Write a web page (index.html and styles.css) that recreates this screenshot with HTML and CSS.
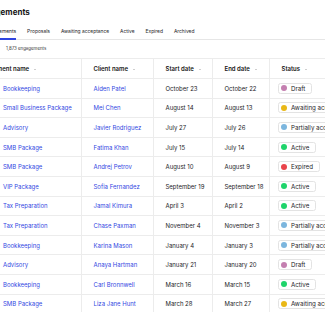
FILE: index.html
```html
<!DOCTYPE html>
<html lang="en">
<head>
    <meta charset="UTF-8">
    <meta name="viewport" content="width=device-width, initial-scale=1.0">
    <title>Engagements</title>
    <link rel="stylesheet" href="styles.css">
</head>
<body>
    <div class="page">
        <h1 class="title">Engagements</h1>

        <div class="tabs">
            <a class="tab active">Engagements</a>
            <a class="tab">Proposals</a>
            <a class="tab">Awaiting acceptance</a>
            <a class="tab">Active</a>
            <a class="tab">Expired</a>
            <a class="tab">Archived</a>
        </div>

        <div class="count">1,873 engagements</div>

        <table class="grid">
            <colgroup>
                <col class="c-name">
                <col class="c-client">
                <col class="c-start">
                <col class="c-end">
                <col class="c-status">
            </colgroup>
            <thead>
                <tr>
                    <th class="first">Engagement name <span class="caret"></span></th>
                    <th>Client name <span class="caret"></span></th>
                    <th>Start date <span class="caret"></span></th>
                    <th>End date <span class="caret"></span></th>
                    <th>Status <span class="caret"></span></th>
                </tr>
            </thead>
            <tbody id="rows"></tbody>
        </table>
    </div>

    <script>
        const rows = [
            ["Bookkeeping", "Aiden Patel", "October 23", "October 22", "draft"],
            ["Small Business Package", "Mei Chen", "August 14", "August 13", "awaiting"],
            ["Advisory", "Javier Rodriguez", "July 27", "July 26", "partial"],
            ["SMB Package", "Fatima Khan", "July 15", "July 14", "active"],
            ["SMB Package", "Andrej Petrov", "August 10", "August 9", "expired"],
            ["VIP Package", "Sofia Fernandez", "September 19", "September 18", "active"],
            ["Tax Preparation", "Jamal Kimura", "April 3", "April 2", "active"],
            ["Tax Preparation", "Chase Paxman", "November 4", "November 3", "partial"],
            ["Bookkeeping", "Karina Mason", "January 4", "January 3", "partial"],
            ["Advisory", "Anaya Hartman", "January 21", "January 20", "draft"],
            ["Bookkeeping", "Carl Bronnwell", "March 16", "March 15", "active"],
            ["SMB Package", "Liza Jane Hunt", "March 28", "March 27", "awaiting"]
        ];

        const labels = {
            draft: "Draft",
            awaiting: "Awaiting acceptance",
            partial: "Partially accepted",
            active: "Active",
            expired: "Expired"
        };

        let body = document.getElementById("rows");
        rows.forEach(r => {
            let tr = document.createElement("tr");
            tr.innerHTML = `
                <td><a class="link">${r[0]}</a></td>
                <td><a class="link">${r[1]}</a></td>
                <td>${r[2]}</td>
                <td>${r[3]}</td>
                <td class="status-cell"><span class="badge"><span class="dot ${r[4]}"></span>${labels[r[4]]}</span></td>
            `;
            body.appendChild(tr);
        });
    </script>
</body>
</html>
```

FILE: styles.css
```css
* {
    margin: 0;
    padding: 0;
    box-sizing: border-box;
}
html, body {
    overflow: hidden;
}
body {
    background: #fff;
    color: #1d1d1f;
    font-family: Inter, "Noto Sans", sans-serif;
}
.page {
    width: 420px;
    margin-left: -14px;
}
.title {
    margin: 7px 0 0 -10px;
    font-size: 8px;
    line-height: 10px;
    font-weight: 700;
    color: #141414;
}
.tabs {
    display: flex;
    gap: 11px;
    margin: 11px 0 0 -1.5px;
    border-bottom: 1px solid #e6e6e6;
}
.tab {
    font-size: 4.9px;
    line-height: 6px;
    padding-bottom: 4px;
    color: #1d1d1f;
    margin-bottom: -1px;
    border-bottom: 2px solid transparent;
}
.tab.active {
    border-bottom-color: #2f45e0;
}
.count {
    padding: 6px 0 6px 20px;
    font-size: 4.4px;
    line-height: 6px;
    color: #333;
}
.grid {
    margin-left: 5px;
    border-collapse: collapse;
    table-layout: fixed;
    width: 358px;
    font-size: 6px;
}
.c-name { width: 90px; }
.c-client { width: 72px; }
.c-start { width: 59px; }
.c-end { width: 57px; }
.c-status { width: 80px; }
th, td {
    height: 19.6px;
    padding: 0 0 0 12px;
    text-align: left;
    white-space: nowrap;
    overflow: hidden;
    border-top: 1px solid #ececec;
    border-bottom: 1px solid #ececec;
    border-left: 1px solid #ececec;
}
th:first-child, td:first-child {
    border-left: none;
}
th {
    height: 20px;
    font-weight: 600;
    color: #161616;
}
th.first {
    text-indent: -28px;
}
td {
    color: #1d1d1f;
}
.caret {
    display: inline-block;
    width: 0;
    height: 0;
    margin-left: 3.5px;
    vertical-align: middle;
    border-left: 1.5px solid transparent;
    border-right: 1.5px solid transparent;
    border-top: 1.5px solid #a0a0a0;
}
.link {
    color: #3247e2;
}
.status-cell {
    padding-left: 8px;
}
.badge {
    display: inline-flex;
    align-items: center;
    gap: 4.5px;
    height: 11px;
    padding: 0 6px 0 2px;
    border: 1px solid #e3e3e3;
    border-radius: 2.5px;
    font-size: 6.2px;
    vertical-align: middle;
}
.dot {
    width: 6px;
    height: 6px;
    border-radius: 50%;
}
.dot.draft { background: #c47fb0; }
.dot.awaiting { background: #e9b817; }
.dot.partial { background: #7cb6de; }
.dot.active { background: #1fd46b; }
.dot.expired { background: #e9444b; }
```
